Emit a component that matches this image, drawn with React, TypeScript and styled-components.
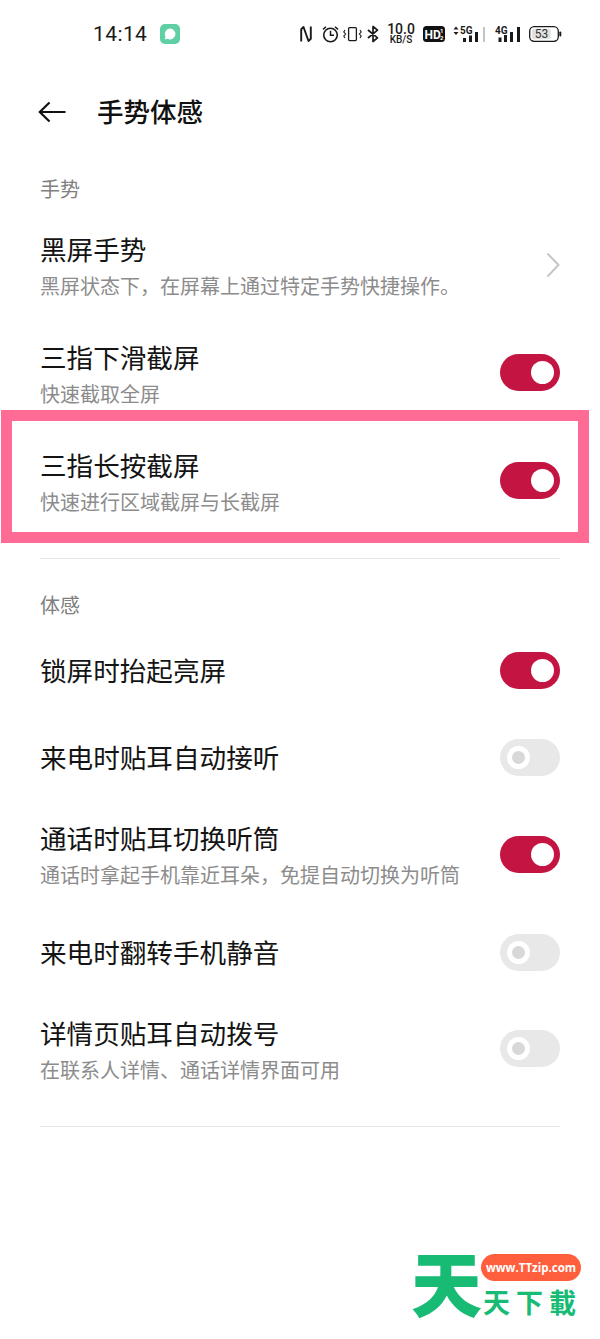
import React from "react";
import styled, { createGlobalStyle } from "styled-components";

const Global = createGlobalStyle`
  html, body { margin: 0; padding: 0; background: #fff; }
  body { font-family: "Noto Sans CJK SC", "Noto Sans", sans-serif; }
`;

const Page = styled.div`
  position: relative;
  width: 600px;
  height: 1339px;
  overflow: hidden;
  background: #fff;
  color: #111;
`;

const StatusBar = styled.div`
  height: 68px;
  display: flex;
  align-items: center;
  padding-left: 93px;
  color: #1a1a1a;
`;

const Time = styled.span`
  font-family: Roboto, sans-serif;
  font-size: 21px;
  width: 67px;
  letter-spacing: 0.4px;
`;

const AppBadge = styled.svg`
  width: 20px;
  height: 20px;
  margin-right: 120px;
`;

const StatusIcon = styled.svg<{ $w: number; $after: number }>`
  width: ${(p) => p.$w}px;
  height: 20px;
  margin-right: ${(p) => p.$after}px;
  flex: none;
  overflow: visible;
`;

const SvgText = styled.text`
  font-family: Roboto, sans-serif;
  font-weight: 700;
`;

const SpeedText = styled.text`
  font-family: Roboto, sans-serif;
  font-weight: 500;
`;

const Header = styled.header`
  height: 88px;
  display: flex;
  align-items: center;
  padding-left: 38px;
`;

const BackIcon = styled.svg`
  width: 28px;
  height: 22px;
  margin-right: 31px;
`;

const Title = styled.h1`
  margin: 0 0 2px;
  font-size: 26.5px;
  font-weight: 500;
  line-height: 36px;
`;

const SectionLabel = styled.div<{ $top: number; $bottom: number }>`
  margin: ${(p) => p.$top}px 40px ${(p) => p.$bottom}px;
  height: 30px;
  line-height: 30px;
  font-size: 20px;
  color: #808080;
`;

const Row = styled.div<{ $double: boolean }>`
  position: relative;
  height: ${(p) => (p.$double ? 108 : 87)}px;
  padding: 0 40px;
  display: flex;
  align-items: center;
  justify-content: space-between;
`;

const RowText = styled.div`
  display: flex;
  flex-direction: column;
  gap: 2px;
`;

const RowTitle = styled.div<{ $single?: boolean }>`
  font-size: 26.6px;
  line-height: 34px;
  color: #141414;
  white-space: nowrap;
  margin-bottom: ${(p) => (p.$single ? 5 : 0)}px;
`;

const RowSub = styled.div`
  font-size: 20px;
  line-height: 36px;
  color: #8c8c8c;
  white-space: nowrap;
`;

const Track = styled.div<{ $on: boolean; $lift: number }>`
  position: relative;
  width: 60px;
  height: 37px;
  flex: none;
  border-radius: 19px;
  margin-bottom: ${(p) => p.$lift}px;
  background: ${(p) => (p.$on ? "#c41442" : "#e8e8e8")};
`;

const Knob = styled.div<{ $on: boolean }>`
  position: absolute;
  top: 7px;
  left: ${(p) => (p.$on ? 31 : 7)}px;
  width: 23px;
  height: 23px;
  box-sizing: border-box;
  border-radius: 50%;
  background: ${(p) => (p.$on ? "#fff" : "#d8d8d8")};
  border: ${(p) => (p.$on ? "none" : "5px solid #fff")};
`;

const Chevron = styled.svg`
  width: 14px;
  height: 26px;
  margin-bottom: 6px;
`;

const Highlight = styled.div`
  position: absolute;
  left: 1px;
  top: -20px;
  width: 588px;
  height: 133px;
  box-sizing: border-box;
  border: 11px solid #ff6b95;
  pointer-events: none;
`;

const Divider = styled.div<{ $top: number }>`
  height: 1px;
  margin: ${(p) => p.$top}px 40px 0;
  background: #e6e6e6;
`;

const Logo = styled.div`
  position: absolute;
  left: 408px;
  top: 1240px;
  width: 180px;
  height: 95px;
`;

const LogoBig = styled.span`
  position: absolute;
  left: 3px;
  top: -8px;
  font-size: 71px;
  line-height: 96px;
  font-weight: 900;
  color: #17bb74;
`;

const LogoPill = styled.div`
  position: absolute;
  left: 73px;
  top: 14px;
  width: 100px;
  height: 27px;
  border-radius: 14px;
  background: #ff5f3c;
  color: #fff;
  font-family: "Open Sans", sans-serif;
  font-size: 11.5px;
  font-weight: 700;
  line-height: 27px;
  text-align: center;
  white-space: nowrap;
`;

const LogoSmall = styled.div`
  position: absolute;
  left: 75px;
  top: 46px;
  display: flex;
  gap: 6px;
  font-size: 27px;
  line-height: 32px;
  font-weight: 700;
  color: #17bb74;
`;

const Toggle = ({ on, lift }: { on: boolean; lift: number }) => (
  <Track $on={on} $lift={lift}>
    <Knob $on={on} />
  </Track>
);

const StatusIcons = () => (
  <>
    <StatusIcon $w={12} $after={10} viewBox="0 0 12 20">
      <path d="M1.2 17.5 V5.2 L3.5 3 L8.5 17 L10.8 14.8 V2.5" fill="none" stroke="#1a1a1a" strokeWidth="1.9" strokeLinejoin="round" />
    </StatusIcon>
    <StatusIcon $w={17} $after={4} viewBox="0 0 17 20">
      <circle cx="8.5" cy="11" r="6.8" fill="none" stroke="#1a1a1a" strokeWidth="1.6" />
      <path d="M8.5 6.8 V11.3 H12 M1 5.4 L4 2.8 M16 5.4 L13 2.8" fill="none" stroke="#1a1a1a" strokeWidth="1.5" />
    </StatusIcon>
    <StatusIcon $w={19} $after={5} viewBox="0 0 19 20">
      <rect x="5.6" y="3.6" width="7.8" height="13" rx="1" fill="none" stroke="#1a1a1a" strokeWidth="1.3" />
      <path d="M2 6 L0.8 8 L2.6 10 L0.8 12 L2 14 M17 6 L18.2 8 L16.4 10 L18.2 12 L17 14" fill="none" stroke="#1a1a1a" strokeWidth="1.1" />
    </StatusIcon>
    <StatusIcon $w={12} $after={9} viewBox="0 0 12 20">
      <path d="M1 6 L10.5 13.8 L6 17.5 V2.5 L10.5 6.2 L1 14" fill="none" stroke="#1a1a1a" strokeWidth="1.7" strokeLinejoin="round" />
    </StatusIcon>
    <StatusIcon $w={26} $after={9} viewBox="0 0 26 20">
      <SpeedText x="13" y="10.2" fontSize="14" textAnchor="middle" fill="#1a1a1a">10.0</SpeedText>
      <SpeedText x="13" y="19" fontSize="10" textAnchor="middle" fill="#1a1a1a">KB/S</SpeedText>
    </StatusIcon>
    <StatusIcon $w={22} $after={8} viewBox="0 0 22 20">
      <rect x="0" y="2" width="22" height="16" rx="3.5" fill="#111" />
      <SvgText x="1.6" y="14.6" fontSize="12" fill="#fff">HD</SvgText>
      <SvgText x="17" y="9.4" fontSize="6" fill="#fff">1</SvgText>
      <SvgText x="17" y="16" fontSize="6" fill="#fff">2</SvgText>
    </StatusIcon>
    <StatusIcon $w={33} $after={9} viewBox="0 0 33 20">
      <path d="M3 2.5 L5.5 5.5 H0.5 Z M3 11 L5.5 8 H0.5 Z" fill="#1a1a1a" />
      <SvgText x="7" y="9.8" fontSize="10" fill="#1a1a1a">5G</SvgText>
      <rect x="10" y="14" width="3" height="4" fill="#1a1a1a" />
      <rect x="16" y="11.5" width="3" height="6.5" fill="#1a1a1a" />
      <rect x="22" y="8" width="3" height="10" fill="#1a1a1a" />
      <rect x="30" y="3" width="2" height="15" fill="#c4c4c4" />
    </StatusIcon>
    <StatusIcon $w={26} $after={8} viewBox="0 0 26 20">
      <SvgText x="0" y="9.8" fontSize="10" fill="#1a1a1a">4G</SvgText>
      <rect x="3.5" y="13.5" width="3" height="4.5" fill="#1a1a1a" />
      <rect x="9" y="11" width="3" height="7" fill="#1a1a1a" />
      <rect x="15" y="8" width="3" height="10" fill="#1a1a1a" />
      <rect x="22" y="3" width="3" height="15" fill="#1a1a1a" />
    </StatusIcon>
    <StatusIcon $w={33} $after={0} viewBox="0 0 33 20">
      <rect x="0.7" y="2.7" width="28.6" height="14.6" rx="4.5" fill="none" stroke="#1a1a1a" strokeWidth="1.3" />
      <rect x="2.8" y="4.8" width="19" height="10.4" rx="2.5" fill="#e2e2e2" />
      <rect x="30.3" y="7.5" width="2" height="5" rx="1" fill="#1a1a1a" />
      <text x="12.5" y="14.4" fontSize="12" textAnchor="middle" fill="#333" fontFamily="Roboto, sans-serif">53</text>
    </StatusIcon>
  </>
);

export default function App() {
  return (
    <Page>
      <Global />
      <StatusBar>
        <Time>14:14</Time>
        <AppBadge viewBox="0 0 20 20">
          <rect width="20" height="20" rx="5" fill="#5fd0a3" />
          <path d="M10 4.6 a5.4 5.4 0 1 1 -2.6 10.1 L4.8 15.4 L5.5 12.8 A5.4 5.4 0 0 1 10 4.6 Z" fill="#fff" />
        </AppBadge>
        <StatusIcons />
      </StatusBar>

      <Header>
        <BackIcon viewBox="0 0 28 22">
          <path d="M27.5 11 H2 M11.5 1.5 L1.8 11 L11.5 20.5" fill="none" stroke="#111" strokeWidth="2.2" />
        </BackIcon>
        <Title>手势体感</Title>
      </Header>

      <SectionLabel $top={18} $bottom={10}>手势</SectionLabel>

      <Row $double>
        <RowText>
          <RowTitle>黑屏手势</RowTitle>
          <RowSub>黑屏状态下，在屏幕上通过特定手势快捷操作。</RowSub>
        </RowText>
        <Chevron viewBox="0 0 14 26">
          <path d="M1.5 1.5 L12.5 13 L1.5 24.5" fill="none" stroke="#c6c6c6" strokeWidth="2" />
        </Chevron>
      </Row>
      <Row $double>
        <RowText>
          <RowTitle>三指下滑截屏</RowTitle>
          <RowSub>快速截取全屏</RowSub>
        </RowText>
        <Toggle on lift={8} />
      </Row>
      <Row $double>
        <Highlight />
        <RowText>
          <RowTitle>三指长按截屏</RowTitle>
          <RowSub>快速进行区域截屏与长截屏</RowSub>
        </RowText>
        <Toggle on lift={8} />
      </Row>

      <Divider $top={20} />
      <SectionLabel $top={31} $bottom={9}>体感</SectionLabel>

      <Row $double={false}>
        <RowTitle $single>锁屏时抬起亮屏</RowTitle>
        <Toggle on lift={4} />
      </Row>
      <Row $double={false}>
        <RowTitle $single>来电时贴耳自动接听</RowTitle>
        <Toggle on={false} lift={4} />
      </Row>
      <Row $double>
        <RowText>
          <RowTitle>通话时贴耳切换听筒</RowTitle>
          <RowSub>通话时拿起手机靠近耳朵，免提自动切换为听筒</RowSub>
        </RowText>
        <Toggle on lift={6} />
      </Row>
      <Row $double={false}>
        <RowTitle $single>来电时翻转手机静音</RowTitle>
        <Toggle on={false} lift={4} />
      </Row>
      <Row $double>
        <RowText>
          <RowTitle>详情页贴耳自动拨号</RowTitle>
          <RowSub>在联系人详情、通话详情界面可用</RowSub>
        </RowText>
        <Toggle on={false} lift={8} />
      </Row>

      <Divider $top={20} />

      <Logo>
        <LogoBig>天</LogoBig>
        <LogoPill>www.TTzip.com</LogoPill>
        <LogoSmall>
          <span>天</span>
          <span>下</span>
          <span>載</span>
        </LogoSmall>
      </Logo>
    </Page>
  );
}
